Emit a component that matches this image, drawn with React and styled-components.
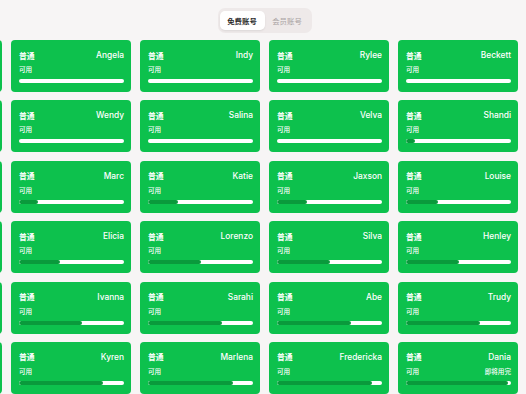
import React, { useState } from "react";
import styled, { createGlobalStyle } from "styled-components";

const GlobalStyle = createGlobalStyle`
  html, body {
    margin: 0;
    padding: 0;
    background: #f7f5f5;
  }
  body {
    width: 526px;
    height: 394px;
    overflow: hidden;
    font-family: "Inter", "Noto Sans CJK SC", sans-serif;
  }
`;

const Page = styled.div`
  display: flex;
  flex-direction: column;
  align-items: center;
  gap: 7px;
  padding: 8px 0 0 3px;
  overflow: hidden;
  height: 394px;
  box-sizing: border-box;
`;

const Tabs = styled.div`
  display: flex;
  padding: 3px 2px;
  background: #eee9e9;
  border-radius: 7px;
`;

const Tab = styled.button`
  border: none;
  height: 19px;
  width: 45px;
  padding: 0;
  border-radius: 5px;
  font-family: "Inter", "Noto Sans CJK SC", sans-serif;
  font-size: 7.4px;
  font-weight: ${({ active }) => (active ? 600 : 400)};
  color: ${({ active }) => (active ? "#2b2b2b" : "#a9a3a3")};
  background: ${({ active }) => (active ? "#ffffff" : "transparent")};
  box-shadow: ${({ active }) =>
    active ? "0 1px 2px rgba(0,0,0,0.08)" : "none"};
  cursor: pointer;
`;

const Grid = styled.div`
  flex-shrink: 0;
  display: grid;
  grid-template-columns: repeat(6, 120px);
  grid-auto-rows: 52px;
  column-gap: 9px;
  row-gap: 8.4px;
`;

const Card = styled.div`
  display: flex;
  flex-direction: column;
  box-sizing: border-box;
  padding: 10px 7px 9px 8px;
  background: #0dc14d;
  border-radius: 4px;
  color: #ffffff;
`;

const Row = styled.div`
  display: flex;
  justify-content: space-between;
  align-items: center;
  height: 10px;
  margin-bottom: ${({ gap }) => gap}px;
`;

const Plan = styled.span`
  font-size: 7.8px;
  font-weight: 700;
`;

const Name = styled.span`
  font-size: 8.4px;
  font-weight: 500;
`;

const Small = styled.span`
  font-size: 6.6px;
  font-weight: 500;
`;

const Track = styled.div`
  height: 4px;
  border-radius: 2px;
  background: #ffffff;
  overflow: hidden;
`;

const Fill = styled.div`
  height: 100%;
  border-radius: 2px;
  background: #0a9a3c;
`;

const rows = [
  [["Mason", 0], ["Angela", 0], ["Indy", 0], ["Rylee", 0], ["Beckett", 0], ["Nova", 0]],
  [["Ezra", 0], ["Wendy", 0], ["Salina", 0], ["Velva", 0], ["Shandi", 9], ["Orin", 10]],
  [["Lila", 15], ["Marc", 18], ["Katie", 29], ["Jaxson", 29], ["Louise", 30], ["Reed", 32]],
  [["Tess", 36], ["Elicia", 39], ["Lorenzo", 50], ["Silva", 50], ["Henley", 50], ["Ivy", 52]],
  [["Noel", 58], ["Ivanna", 60], ["Sarahi", 70], ["Abe", 70], ["Trudy", 70], ["Cole", 72]],
  [["Jude", 78], ["Kyren", 80], ["Marlena", 81], ["Fredericka", 90], ["Dania", 97], ["Zane", 98]],
];

const AccountCard = ({ name, used }) => (
  <Card>
    <Row gap={4}>
      <Plan>普通</Plan>
      <Name>{name}</Name>
    </Row>
    <Row gap={5}>
      <Small>可用</Small>
      {used >= 95 && <Small>即将用完</Small>}
    </Row>
    <Track>
      <Fill style={{ width: `${used}%` }} />
    </Track>
  </Card>
);

export default function App() {
  const [tab, setTab] = useState(0);
  return (
    <>
      <GlobalStyle />
      <Page>
        <Tabs>
          <Tab active={tab === 0} onClick={() => setTab(0)}>
            免费账号
          </Tab>
          <Tab active={tab === 1} onClick={() => setTab(1)}>
            会员账号
          </Tab>
        </Tabs>
        <Grid>
          {rows.flat().map(([name, used]) => (
            <AccountCard key={name} name={name} used={used} />
          ))}
        </Grid>
      </Page>
    </>
  );
}
